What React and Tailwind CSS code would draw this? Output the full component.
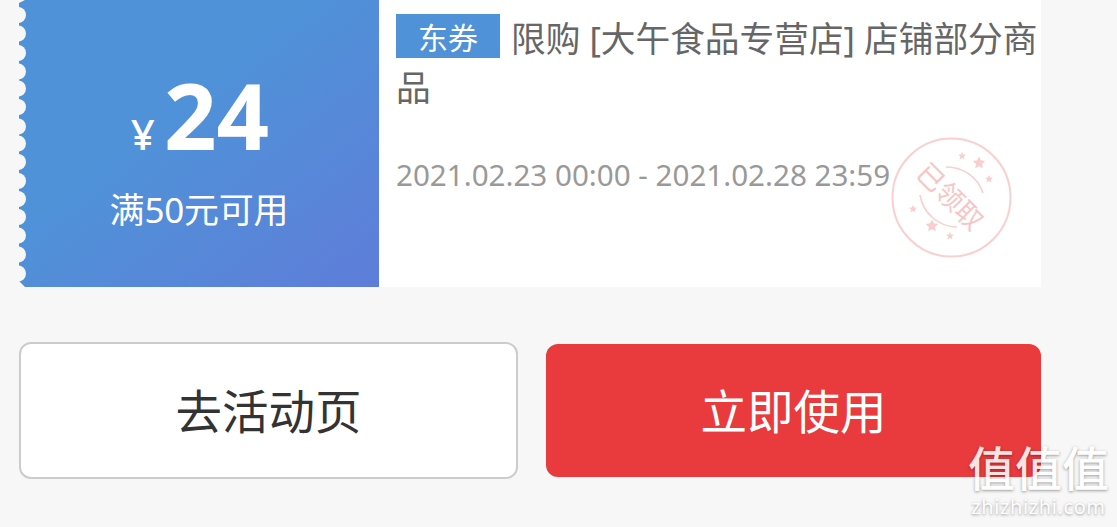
const sans = { fontFamily: '"Noto Sans", "Noto Sans CJK SC", sans-serif' };

function Scallops() {
  const ys = [15, 33.5, 53, 71.5, 88.5, 107, 126.5, 143.5, 162, 181, 199, 217, 235.5, 254.5, 273.5];
  return (
    <svg className="absolute left-0 top-0 h-[287px] w-[8px]" viewBox="0 0 8 287">
      {ys.map((y) => (
        <circle key={y} cx="-1" cy={y} r="8" fill="#f7f7f7" />
      ))}
      <path d="M0 281 L0 287 L6 287 Z" fill="#f7f7f7" />
      <path d="M0 0 L0 3 L6 0 Z" fill="#f7f7f7" />
    </svg>
  );
}

function Star({ x, y, r }) {
  const pts = [];
  for (let i = 0; i < 10; i++) {
    const a = -Math.PI / 2 + (i * Math.PI) / 5;
    const rr = i % 2 ? r * 0.5 : r;
    pts.push(`${x + rr * Math.cos(a)},${y + rr * Math.sin(a)}`);
  }
  return <polygon points={pts.join(" ")} fill="#f7cfce" />;
}

function Stamp() {
  return (
    <svg className="absolute left-[872px] top-[137px] h-[122px] w-[122px]" viewBox="0 0 122 122">
      <circle cx="60.5" cy="60.5" r="59" fill="none" stroke="#f8d0cf" strokeWidth="2" />
      <path d="M55 30 A38 38 0 0 1 92 56" fill="none" stroke="#f8d0cf" strokeWidth="1.6" />
      <path d="M29 58 A38 38 0 0 0 66 90" fill="none" stroke="#f8d0cf" strokeWidth="1.6" />
      <Star x={71} y={19} r={4} />
      <Star x={88} y={26} r={6.5} />
      <Star x={98} y={42} r={4} />
      <Star x={22} y={72} r={4} />
      <Star x={41} y={89} r={6.5} />
      <Star x={59} y={99} r={4} />
      <text x="59" y="70" textAnchor="middle" transform="rotate(45 60 60)" fontSize="27" fill="#f6c6c5" style={sans}>
        已领取
      </text>
    </svg>
  );
}

export default function App() {
  return (
    <div className="relative h-[527px] w-[1117px] overflow-hidden bg-[#f7f7f7]" style={sans}>
      <div className="pl-[19px] pr-[76px]">
        <div className="relative flex h-[287px]">
          <div className="relative flex w-[360px] shrink-0 flex-col items-center bg-gradient-to-br from-[#4f92d8] from-40% to-[#5e7dd9] text-white">
            <Scallops />
            <div className="mt-[67px] flex h-[96px] items-baseline pl-[2px]">
              <span className="mr-[9px] text-[42px] font-medium leading-none">¥</span>
              <span className="text-[92px] font-bold leading-[96px]">24</span>
            </div>
            <div className="mt-[22px] text-[35px] leading-[50px] tracking-[-0.2px]">满50元可用</div>
          </div>
          <div className="relative flex-1 bg-white pl-[17px] pt-[14px]">
            <div className="text-[34.7px] leading-[49px] text-[#666]">
              <span className="mr-[11px] inline-block h-[44px] w-[104px] bg-[#4f92d8] text-center align-top text-[30px] leading-[48px] text-white">
                东券
              </span>
              限购 [大午食品专营店] 店铺部分商品
            </div>
            <div className="mt-[41px] text-[29.6px] leading-[44px] text-[#999]">2021.02.23 00:00 - 2021.02.28 23:59</div>
          </div>
          <div className="absolute left-0 top-0"><Stamp /></div>
        </div>
        <div className="mt-[55px] flex items-center">
          <button className="h-[137px] w-[499px] rounded-[12px] border-2 border-[#ccc] bg-white pt-[3px] text-[46.5px] text-[#333]">
            去活动页
          </button>
          <button className="ml-[28px] h-[133px] w-[495px] rounded-[12px] bg-[#e93b3d] pt-[3px] text-[46.5px] text-white">
            立即使用
          </button>
        </div>
      </div>
      <div className="absolute left-[966px] top-[441px] w-[145px] text-center text-white opacity-85 [text-shadow:0_1px_3px_rgba(0,0,0,0.45)]">
        <div className="text-[47px] font-medium leading-[54px] tracking-[0px]">值值值</div>
        <div className="text-[20px] leading-[24px] tracking-[0.6px]">zhizhizhi.com</div>
      </div>
    </div>
  );
}
